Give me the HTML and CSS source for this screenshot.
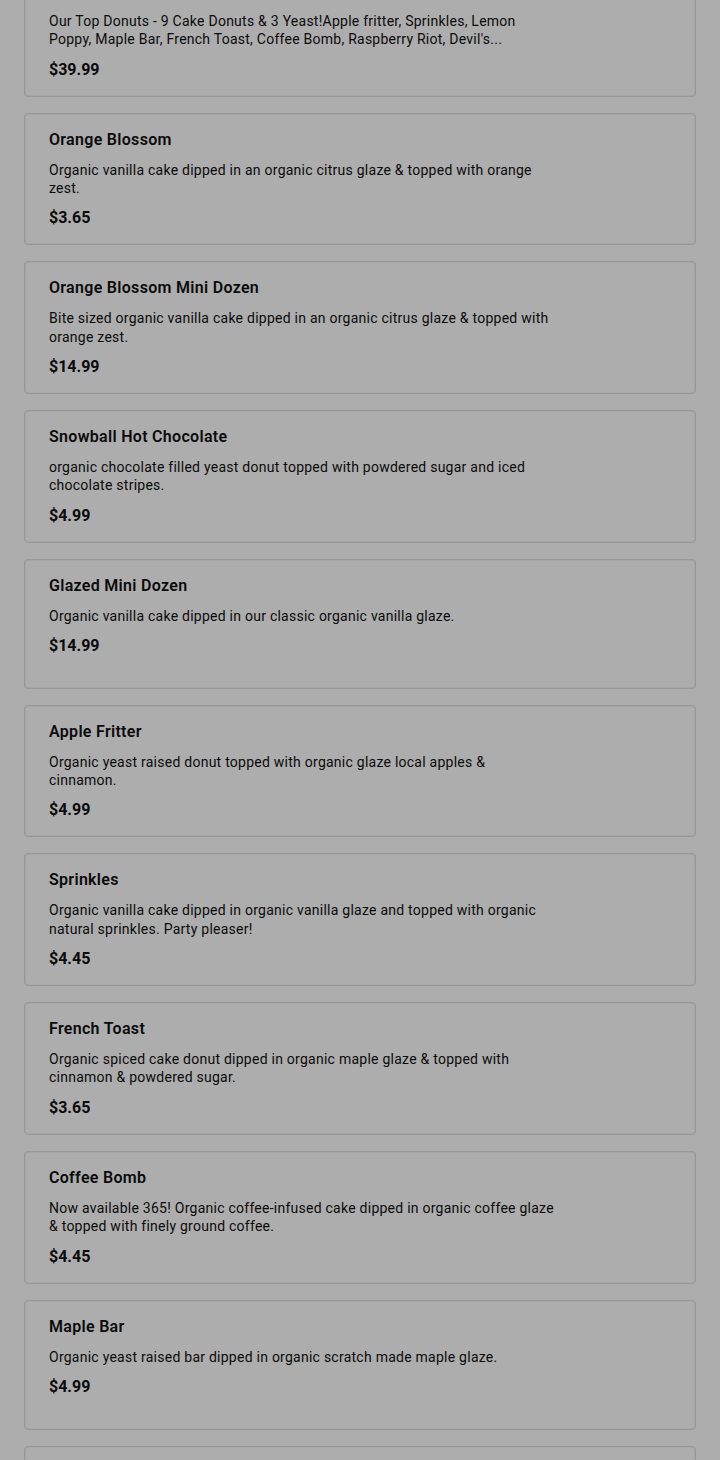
FILE: index.html
```html
<!DOCTYPE html>
<html lang="en">
<head>
<meta charset="utf-8">
<title>Menu</title>
<link rel="stylesheet" href="styles.css">
</head>
<body>
<main class="list">
  <article class="card">
    <h3 class="title">Box of the Dozen</h3>
    <p class="desc">Our Top Donuts - 9 Cake Donuts &amp; 3 Yeast!Apple fritter, Sprinkles, Lemon Poppy, Maple Bar, French Toast, Coffee Bomb, Raspberry Riot, Devil's...</p>
    <div class="price">$39.99</div>
  </article>
  <article class="card">
    <h3 class="title">Orange Blossom</h3>
    <p class="desc">Organic vanilla cake dipped in an organic citrus glaze &amp; topped with orange zest.</p>
    <div class="price">$3.65</div>
  </article>
  <article class="card">
    <h3 class="title">Orange Blossom Mini Dozen</h3>
    <p class="desc">Bite sized organic vanilla cake dipped in an organic citrus glaze &amp; topped with orange zest.</p>
    <div class="price">$14.99</div>
  </article>
  <article class="card">
    <h3 class="title">Snowball Hot Chocolate</h3>
    <p class="desc">organic chocolate filled yeast donut topped with powdered sugar and iced chocolate stripes.</p>
    <div class="price">$4.99</div>
  </article>
  <article class="card">
    <h3 class="title">Glazed Mini Dozen</h3>
    <p class="desc">Organic vanilla cake dipped in our classic organic vanilla glaze.</p>
    <div class="price">$14.99</div>
  </article>
  <article class="card">
    <h3 class="title">Apple Fritter</h3>
    <p class="desc">Organic yeast raised donut topped with organic glaze local apples &amp; cinnamon.</p>
    <div class="price">$4.99</div>
  </article>
  <article class="card">
    <h3 class="title">Sprinkles</h3>
    <p class="desc">Organic vanilla cake dipped in organic vanilla glaze and topped with organic natural sprinkles. Party pleaser!</p>
    <div class="price">$4.45</div>
  </article>
  <article class="card">
    <h3 class="title">French Toast</h3>
    <p class="desc">Organic spiced cake donut dipped in organic maple glaze &amp; topped with cinnamon &amp; powdered sugar.</p>
    <div class="price">$3.65</div>
  </article>
  <article class="card">
    <h3 class="title">Coffee Bomb</h3>
    <p class="desc">Now available 365! Organic coffee-infused cake dipped in organic coffee glaze &amp; topped with finely ground coffee.</p>
    <div class="price">$4.45</div>
  </article>
  <article class="card">
    <h3 class="title">Maple Bar</h3>
    <p class="desc">Organic yeast raised bar dipped in organic scratch made maple glaze.</p>
    <div class="price">$4.99</div>
  </article>
  <article class="card">
    <h3 class="title">Raspberry Riot</h3>
    <p class="desc">Organic vanilla cake dipped in organic raspberry glaze.</p>
    <div class="price">$3.65</div>
  </article>
</main>
</body>
</html>
```
FILE: styles.css
```css
html, body {
  margin: 0;
  padding: 0;
  background: #adadad;
}
body {
  font-family: "Roboto", "Noto Sans", sans-serif;
  color: #0b0b0b;
  overflow: hidden;
}
.list {
  display: flex;
  flex-direction: column;
  gap: 16px;
  padding: 0 24px;
  margin-top: -36px;
}
.card {
  box-sizing: border-box;
  min-height: 130px;
  border: 1px solid #979797;
  border-radius: 4px;
  padding: 16px 24px 16px;
  background: #adadad;
  box-shadow: inset 0 0 0 1px #a6a6a6;
}
.title {
  margin: 0 0 11px;
  font-size: 16px;
  line-height: 20px;
  font-weight: 600;
  letter-spacing: 0.3px;
}
.desc {
  margin: 0 0 11px;
  max-width: 505px;
  font-size: 14px;
  line-height: 18.35px;
  font-weight: 400;
  letter-spacing: 0.25px;
}
.price {
  font-size: 16px;
  line-height: 20px;
  font-weight: 700;
}
```
